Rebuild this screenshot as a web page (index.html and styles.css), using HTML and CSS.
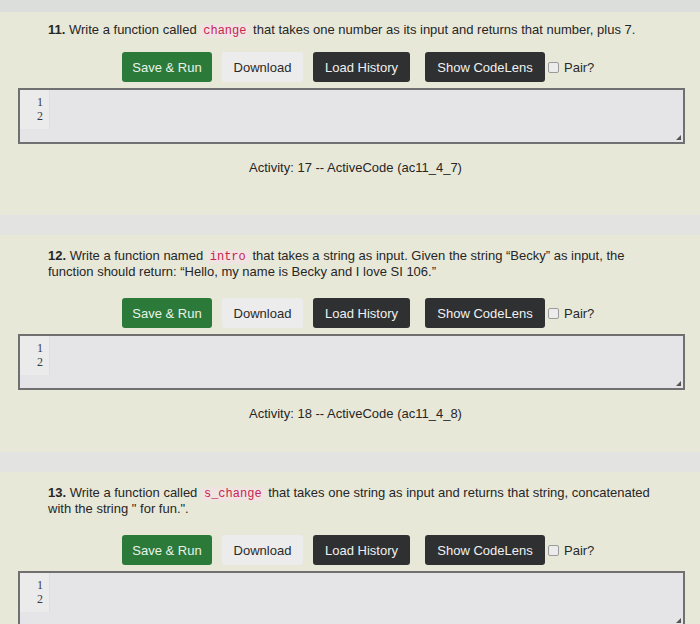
FILE: index.html
```html
<!DOCTYPE html>
<html>
<head>
<meta charset="utf-8">
<link rel="stylesheet" href="styles.css">
</head>
<body>
<div class="band band-top"></div>
<section class="q q1">
  <p class="title"><b>11.</b> Write a function called <code>change</code> that takes one number as its input and returns that number, plus 7.</p>
  <div class="buttons">
    <button class="btn green">Save &amp; Run</button>
    <button class="btn light">Download</button>
    <button class="btn dark">Load History</button>
    <button class="btn dark">Show CodeLens</button>
    <label class="pair"><span class="box"></span>Pair?</label>
  </div>
  <div class="editor">
    <div class="gutter"><div>1</div><div>2</div></div>
    <div class="handle"></div>
  </div>
  <p class="activity">Activity: 17 -- ActiveCode (ac11_4_7)</p>
</section>
<div class="band"></div>
<section class="q q2">
  <p class="title"><b>12.</b> Write a function named <code>intro</code> that takes a string as input. Given the string “Becky” as input, the function should return: “Hello, my name is Becky and I love SI 106.”</p>
  <div class="buttons">
    <button class="btn green">Save &amp; Run</button>
    <button class="btn light">Download</button>
    <button class="btn dark">Load History</button>
    <button class="btn dark">Show CodeLens</button>
    <label class="pair"><span class="box"></span>Pair?</label>
  </div>
  <div class="editor">
    <div class="gutter"><div>1</div><div>2</div></div>
    <div class="handle"></div>
  </div>
  <p class="activity">Activity: 18 -- ActiveCode (ac11_4_8)</p>
</section>
<div class="band"></div>
<section class="q q3">
  <p class="title"><b>13.</b> Write a function called <code>s_change</code> that takes one string as input and returns that string, concatenated with the string " for fun.".</p>
  <div class="buttons">
    <button class="btn green">Save &amp; Run</button>
    <button class="btn light">Download</button>
    <button class="btn dark">Load History</button>
    <button class="btn dark">Show CodeLens</button>
    <label class="pair"><span class="box"></span>Pair?</label>
  </div>
  <div class="editor">
    <div class="gutter"><div>1</div><div>2</div></div>
    <div class="handle"></div>
  </div>
</section>
</body>
</html>
```

FILE: styles.css
```css
html, body {
  margin: 0;
  padding: 0;
}
body {
  width: 700px;
  height: 624px;
  overflow: hidden;
  background: #e8e8d9;
  font-family: "Liberation Sans", Arial, sans-serif;
  color: #262626;
}
.band {
  height: 20px;
  background: #e3e4e2;
}
.band-top {
  height: 12px;
  background: #dcdedc;
}
.q {
  padding: 0 15px 0 18px;
  height: 203px;
  overflow: hidden;
}
.q2 { height: 217px; }
.q3 { height: 152px; }
.title {
  margin: 0;
  padding: 10px 30px 0 30px;
  font-size: 13px;
  line-height: 16px;
}
.q2 .title, .q3 .title { padding-top: 13px; }
.title b { font-weight: bold; }
.title code {
  font-family: "Liberation Mono", monospace;
  font-size: 12px;
  line-height: 14px;
  color: #c7254e;
  background: #f0e4e3;
  padding: 0 3px;
  border-radius: 3px;
}
.buttons {
  display: flex;
  align-items: center;
  margin: 14px 0 0 104px;
  height: 30px;
}
.q2 .buttons, .q3 .buttons { margin-top: 18px; }
.btn {
  height: 30px;
  border: none;
  border-radius: 3px;
  font-family: "Liberation Sans", Arial, sans-serif;
  font-size: 13px;
  padding: 0;
  white-space: nowrap;
  margin-right: 10px;
}
.green {
  background: #2b7a3a;
  color: #e9f3ea;
  width: 90px;
}
.light {
  background: #ececec;
  color: #2a2a2a;
  width: 81px;
}
.dark {
  background: #2f3031;
  color: #f0f0f0;
  width: 97px;
  margin-right: 15px;
}
.dark + .dark {
  width: 120px;
  margin-right: 3px;
}
.pair {
  display: flex;
  align-items: center;
  font-size: 13px;
  color: #2a2a2a;
}
.box {
  width: 9px;
  height: 9px;
  border: 1px solid #9a9a9a;
  border-radius: 2px;
  background: #ececec;
  margin-right: 5px;
}
.editor {
  position: relative;
  margin-top: 6px;
  height: 52px;
  border: 2px solid #707070;
  background: #e5e5e8;
}
.gutter {
  width: 29px;
  padding-top: 5px;
  height: 34px;
  background: #ebebeb;
  border-right: 1px solid #dedede;
  font-family: "Liberation Serif", serif;
  font-size: 12px;
  line-height: 14px;
  color: #3a3a3a;
  text-align: right;
  box-sizing: content-box;
}
.gutter div { padding-right: 6px; }
.handle {
  position: absolute;
  right: 2px;
  bottom: 2px;
  width: 0;
  height: 0;
  border-left: 5px solid transparent;
  border-bottom: 5px solid #555;
}
.activity {
  margin: 16px 0 0 0;
  text-align: center;
  font-size: 13px;
  padding-left: 8px;
}
```
